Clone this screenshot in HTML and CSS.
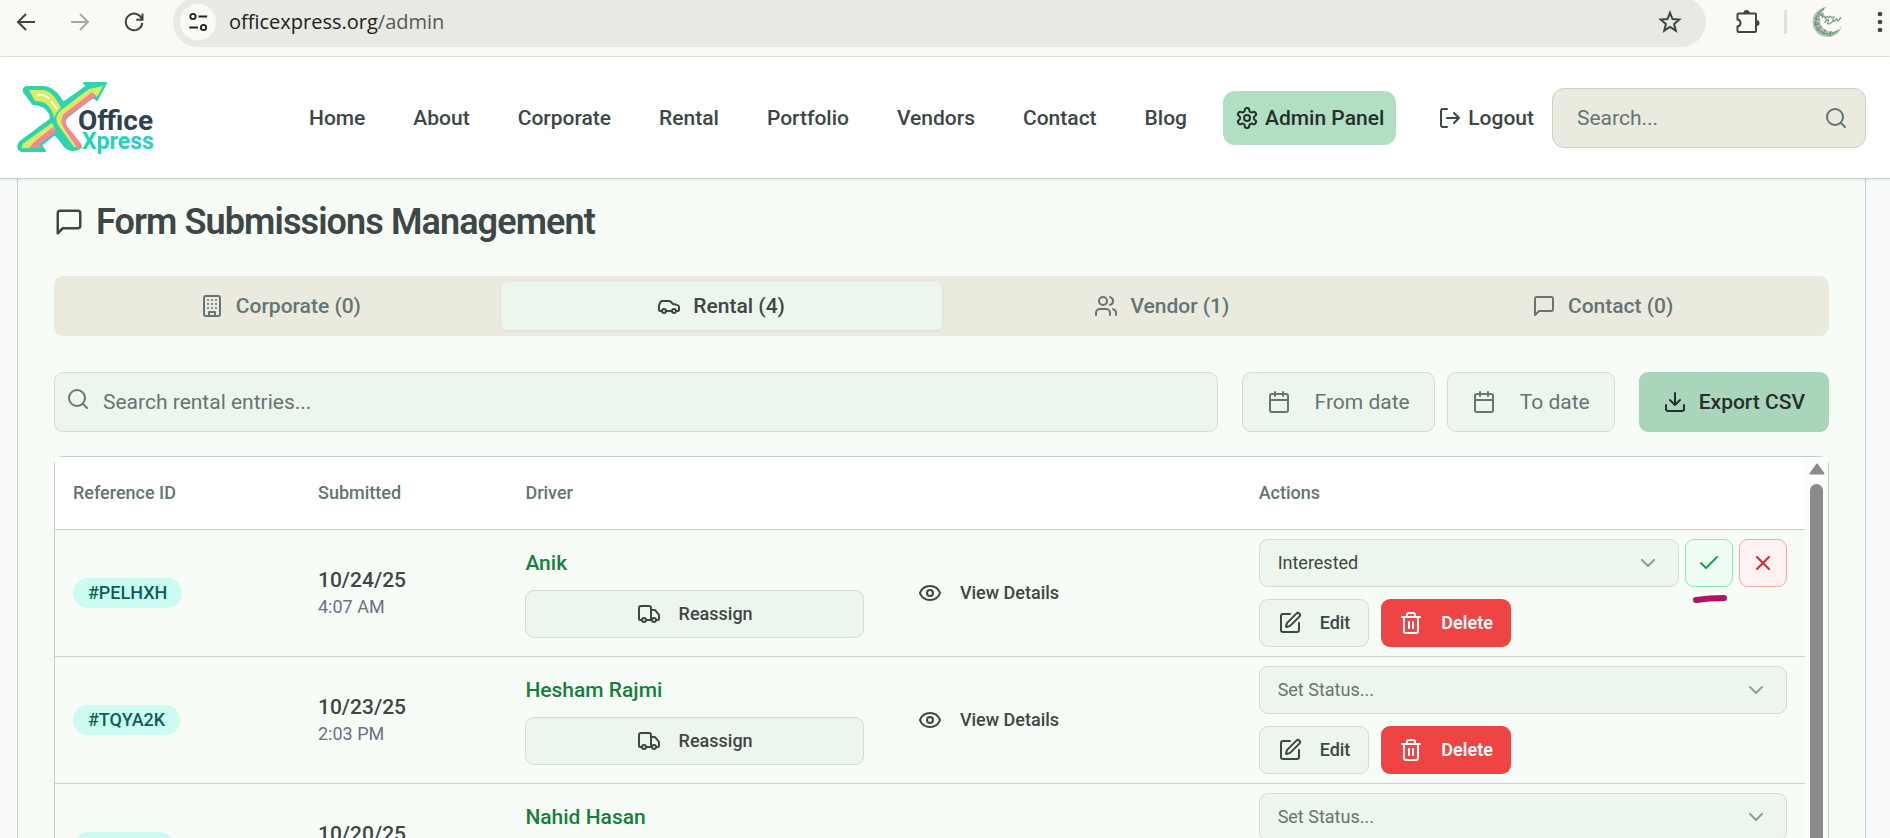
FILE: index.html
```html
<!DOCTYPE html>
<html lang="en">
<head>
<meta charset="utf-8">
<title>OfficeXpress Admin</title>
<link rel="stylesheet" href="styles.css">
</head>
<body>
<svg class="sprite" aria-hidden="true">
  <symbol id="i-gear" viewBox="0 0 24 24"><path d="M12.22 2h-.44a2 2 0 0 0-2 2v.18a2 2 0 0 1-1 1.73l-.43.25a2 2 0 0 1-2 0l-.15-.08a2 2 0 0 0-2.73.73l-.22.38a2 2 0 0 0 .73 2.73l.15.1a2 2 0 0 1 1 1.72v.51a2 2 0 0 1-1 1.74l-.15.09a2 2 0 0 0-.73 2.73l.22.38a2 2 0 0 0 2.73.73l.15-.08a2 2 0 0 1 2 0l.43.25a2 2 0 0 1 1 1.73V20a2 2 0 0 0 2 2h.44a2 2 0 0 0 2-2v-.18a2 2 0 0 1 1-1.73l.43-.25a2 2 0 0 1 2 0l.15.08a2 2 0 0 0 2.73-.73l.22-.39a2 2 0 0 0-.73-2.73l-.15-.08a2 2 0 0 1-1-1.74v-.5a2 2 0 0 1 1-1.74l.15-.09a2 2 0 0 0 .73-2.73l-.22-.38a2 2 0 0 0-2.73-.73l-.15.08a2 2 0 0 1-2 0l-.43-.25a2 2 0 0 1-1-1.73V4a2 2 0 0 0-2-2z"/><circle cx="12" cy="12" r="3"/></symbol>
  <symbol id="i-logout" viewBox="0 0 24 24"><path d="M9 21H5a2 2 0 0 1-2-2V5a2 2 0 0 1 2-2h4M16 17l5-5-5-5M21 12H9"/></symbol>
  <symbol id="i-search" viewBox="0 0 24 24"><circle cx="11" cy="11" r="8"/><path d="m21 21-4.300-4.300"/></symbol>
  <symbol id="i-message" viewBox="0 0 24 24"><path d="M21 15a2 2 0 0 1-2 2H7l-4 4V5a2 2 0 0 1 2-2h14a2 2 0 0 1 2 2z"/></symbol>
  <symbol id="i-building" viewBox="0 0 24 24"><rect width="16" height="20" x="4" y="2" rx="2"/><path d="M9 22v-4h6v4M8 6h.01M16 6h.01M12 6h.01M12 10h.01M12 14h.01M16 10h.01M16 14h.01M8 10h.01M8 14h.01"/></symbol>
  <symbol id="i-car" viewBox="0 0 24 24"><path d="M19 17h2c.6 0 1-.4 1-1v-3c0-.9-.7-1.700-1.500-1.900C18.700 10.600 16 10 16 10s-1.300-1.400-2.200-2.300c-.5-.4-1.100-.7-1.800-.7H5c-.6 0-1.100.4-1.400.9l-1.400 2.900A3.700 3.700 0 0 0 2 12v4c0 .6.4 1 1 1h2"/><circle cx="7" cy="17" r="2"/><path d="M9 17h6"/><circle cx="17" cy="17" r="2"/></symbol>
  <symbol id="i-users" viewBox="0 0 24 24"><path d="M16 21v-2a4 4 0 0 0-4-4H6a4 4 0 0 0-4 4v2"/><circle cx="9" cy="7" r="4"/><path d="M22 21v-2a4 4 0 0 0-3-3.870M16 3.130a4 4 0 0 1 0 7.750"/></symbol>
  <symbol id="i-calendar" viewBox="0 0 24 24"><path d="M8 2v4M16 2v4"/><rect width="18" height="18" x="3" y="4" rx="2"/><path d="M3 10h18"/></symbol>
  <symbol id="i-download" viewBox="0 0 24 24"><path d="M21 15v4a2 2 0 0 1-2 2H5a2 2 0 0 1-2-2v-4M7 10l5 5 5-5M12 15V3"/></symbol>
  <symbol id="i-truck" viewBox="0 0 24 24"><path d="M14 18V6a2 2 0 0 0-2-2H4a2 2 0 0 0-2 2v11a1 1 0 0 0 1 1h2M15 18H9M19 18h2a1 1 0 0 0 1-1v-3.650a1 1 0 0 0-.22-.624l-3.480-4.350A1 1 0 0 0 17.520 8H14"/><circle cx="17" cy="18" r="2"/><circle cx="7" cy="18" r="2"/></symbol>
  <symbol id="i-eye" viewBox="0 0 24 24"><path d="M2.062 12.348a1 1 0 0 1 0-.696 10.750 10.750 0 0 1 19.876 0 1 1 0 0 1 0 .696 10.750 10.750 0 0 1-19.876 0"/><circle cx="12" cy="12" r="3"/></symbol>
  <symbol id="i-chevron" viewBox="0 0 24 24"><path d="m6 9 6 6 6-6"/></symbol>
  <symbol id="i-check" viewBox="0 0 24 24"><path d="M20 6 9 17l-5-5"/></symbol>
  <symbol id="i-x" viewBox="0 0 24 24"><path d="M18 6 6 18M6 6l12 12"/></symbol>
  <symbol id="i-edit" viewBox="0 0 24 24"><path d="M12 3H5a2 2 0 0 0-2 2v14a2 2 0 0 0 2 2h14a2 2 0 0 0 2-2v-7"/><path d="M18.375 2.625a1 1 0 0 1 3 3l-9.013 9.014a2 2 0 0 1-.853.505l-2.873.84a.5.5 0 0 1-.62-.62l.84-2.873a2 2 0 0 1 .506-.852z"/></symbol>
  <symbol id="i-trash" viewBox="0 0 24 24"><path d="M3 6h18M19 6v14c0 1-1 2-2 2H7c-1 0-2-1-2-2V6M8 6V4c0-1 1-2 2-2h4c1 0 2 1 2 2v2M10 11v6M14 11v6"/></symbol>
</svg>

<div class="browser">
  <button class="tool" aria-label="Back"><svg class="glyph" viewBox="0 0 24 24"><path d="M21 12H4M12 4l-8 8 8 8"/></svg></button>
  <button class="tool tool-off" aria-label="Forward" disabled><svg class="glyph" viewBox="0 0 24 24"><path d="M3 12h17M12 4l8 8-8 8"/></svg></button>
  <button class="tool" aria-label="Reload"><svg class="glyph" viewBox="0 0 24 24"><path d="M20 9.500A8.300 8.300 0 1 0 20.300 13M20.500 3.500v6.200h-6.200"/></svg></button>
  <div class="address">
    <button class="site" aria-label="Site information"><svg class="glyph" viewBox="0 0 24 24"><circle cx="6.500" cy="6" r="2.900"/><path d="M12.500 6H22M2.500 18H12"/><circle cx="18" cy="18" r="2.900"/></svg></button>
    <span class="url">officexpress.org<span class="path">/admin</span></span>
    <button class="star" aria-label="Bookmark"><svg class="glyph" viewBox="0 0 24 24"><path d="m12 2.800 2.500 6.300 6.800.5-5.200 4.400 1.700 6.700L12 17l-5.800 3.700L7.900 14 2.700 9.600l6.800-.5z"/></svg></button>
  </div>
  <button class="tool puzzle" aria-label="Extensions"><svg class="glyph" viewBox="0 0 24 24"><path d="M2.500 3.500H19a1 1 0 0 1 1 1V21a1 1 0 0 1-1 1H2.500a1 1 0 0 1-1-1v-4.500c4-.8 4-6.200 0-7V4.500a1 1 0 0 1 1-1z"/><path class="fill" d="M7.500 3a3 3 0 0 1 6 0zM20.500 10a3 3 0 0 1 0 6z"/></svg></button>
  <span class="divider"></span>
  <button class="avatar" aria-label="Profile"><svg viewBox="0 0 32 32"><path d="M16 1A15 15 0 1 0 31 20 12 12 0 0 1 9 16C8 9 11 4 16 1z" fill="#a9c3ad"/><path d="M13 3C4 8 3 18 7 23c5 6 14 7 20 1M7 7l4 3M4 12l5 2M3 18l6 0M6 24l5-4M12 28l3-5M19 30l1-5" fill="none" stroke="#66896f" stroke-width="1.500" stroke-dasharray="2 1"/><path d="M10 9c2-4 3 0 1 3 2-3 3-2 3 0s2-3 3-1 2-2 3 0 2-1 4 0M14 17c1-5 5-4 3-1s2 2 4 0 1-5 1-2 2 1 3-1 1 4 3 1 1-3 2-1" fill="none" stroke="#7f9e85" stroke-width="1.300"/></svg></button>
  <button class="tool menu" aria-label="Menu"><svg viewBox="0 0 8 24"><circle cx="4" cy="4" r="2.300"/><circle cx="4" cy="12" r="2.300"/><circle cx="4" cy="20" r="2.300"/></svg></button>
</div>

<header class="header">
  <a class="logo" href="#" aria-label="Office Xpress">
    <svg viewBox="0 0 138 74">
      <path d="M10 6H27Q38 7 46 22L70 5 67 2H89L80 19 76 16 50 36Q46 40 49 46L64 66Q62 69 55 69 50 69 46 63L38 53 24 64 28 70H4Q-1 67 3 61L34 38Q34 31 27 26 22 23 16 23L7 11Q6 6 10 6z" fill="#2fd3b0" stroke="#2fd3b0" stroke-width="2" stroke-linejoin="round"/>
      <path d="M12 9H26Q36 10 44 27 39 31 37 37 36 28 28 22 24 20 18 20z" fill="#dcec62"/>
      <path d="M72 8 86 5 80 16 76 12 47 33Q43 37 47 44L62 66H57L41 44Q37 36 43 30z" fill="#dcec62"/>
      <path d="M75 11 78 16 51 35Q47 39 50 45L65 64 61 68 46 46Q42 38 48 32z" fill="#fb8491"/>
      <path d="M35 42 38 48 14 67H5Q4 64 7 62z" fill="#dcec62"/>
      <path d="M36 46 39 51 21 64 28 67H12L17 61z" fill="#fb8491"/>
      <path d="M20 14q8-1 12 4M34 20l6 8" fill="none" stroke="#fff" stroke-width="1.500"/>
      <text class="logo-office" x="61" y="49">Office</text>
      <text class="logo-xpress" x="65" y="68">Xpress</text>
    </svg>
  </a>
  <nav class="nav">
    <a class="link" href="#">Home</a>
    <a class="link" href="#">About</a>
    <a class="link" href="#">Corporate</a>
    <a class="link" href="#">Rental</a>
    <a class="link" href="#">Portfolio</a>
    <a class="link" href="#">Vendors</a>
    <a class="link" href="#">Contact</a>
    <a class="link" href="#">Blog</a>
    <a class="link link-active" href="#"><svg class="icon"><use href="#i-gear"/></svg>Admin Panel</a>
    <button class="link logout"><svg class="icon"><use href="#i-logout"/></svg>Logout</button>
  </nav>
  <div class="site-search">
    <input class="site-input" type="text" placeholder="Search..." aria-label="Search">
    <svg class="icon site-icon"><use href="#i-search"/></svg>
  </div>
</header>

<main class="page">
  <section class="card">
    <h1 class="title"><svg class="icon icon-lg"><use href="#i-message"/></svg>Form Submissions Management</h1>
    <div class="tabs" role="tablist">
      <button class="tab" role="tab"><svg class="icon"><use href="#i-building"/></svg>Corporate (0)</button>
      <button class="tab tab-active" role="tab" aria-selected="true"><svg class="icon"><use href="#i-car"/></svg>Rental (4)</button>
      <button class="tab" role="tab"><svg class="icon"><use href="#i-users"/></svg>Vendor (1)</button>
      <button class="tab" role="tab"><svg class="icon"><use href="#i-message"/></svg>Contact (0)</button>
    </div>
    <div class="filters">
      <div class="search">
        <input class="search-input" type="text" placeholder="Search rental entries..." aria-label="Search rental entries">
        <svg class="icon search-icon"><use href="#i-search"/></svg>
      </div>
      <div class="dates">
        <button class="date"><svg class="icon"><use href="#i-calendar"/></svg>From date</button>
        <button class="date"><svg class="icon"><use href="#i-calendar"/></svg>To date</button>
      </div>
      <button class="export"><svg class="icon"><use href="#i-download"/></svg>Export CSV</button>
    </div>
    <div class="table-box">
      <table class="table">
        <colgroup><col class="c-ref"><col class="c-sub"><col class="c-driver"><col class="c-view"><col class="c-act"></colgroup>
        <thead>
          <tr><th>Reference ID</th><th>Submitted</th><th>Driver</th><th></th><th>Actions</th></tr>
        </thead>
        <tbody>
          <tr>
            <td><span class="badge">#PELHXH</span></td>
            <td><div class="day">10/24/25</div><div class="time">4:07 AM</div></td>
            <td><div class="driver">Anik</div><button class="btn btn-wide"><svg class="icon"><use href="#i-truck"/></svg>Reassign</button></td>
            <td><button class="btn btn-ghost"><svg class="icon"><use href="#i-eye"/></svg>View Details</button></td>
            <td>
              <div class="status">
                <div class="select"><select class="select-input select-set" aria-label="Status"><option>Interested</option></select><svg class="icon chevron"><use href="#i-chevron"/></svg></div>
                <button class="btn-icon accept" aria-label="Accept"><svg class="icon"><use href="#i-check"/></svg><svg class="mark" viewBox="0 0 38 10" aria-hidden="true"><path d="M5 6Q18 4 33 4"/></svg></button>
                <button class="btn-icon reject" aria-label="Reject"><svg class="icon"><use href="#i-x"/></svg></button>
              </div>
              <div class="row-actions"><button class="btn"><svg class="icon"><use href="#i-edit"/></svg>Edit</button><button class="btn btn-delete"><svg class="icon"><use href="#i-trash"/></svg>Delete</button></div>
            </td>
          </tr>
          <tr>
            <td><span class="badge">#TQYA2K</span></td>
            <td><div class="day">10/23/25</div><div class="time">2:03 PM</div></td>
            <td><div class="driver">Hesham Rajmi</div><button class="btn btn-wide"><svg class="icon"><use href="#i-truck"/></svg>Reassign</button></td>
            <td><button class="btn btn-ghost"><svg class="icon"><use href="#i-eye"/></svg>View Details</button></td>
            <td>
              <div class="status"><div class="select"><select class="select-input" aria-label="Status"><option>Set Status...</option></select><svg class="icon chevron"><use href="#i-chevron"/></svg></div></div>
              <div class="row-actions"><button class="btn"><svg class="icon"><use href="#i-edit"/></svg>Edit</button><button class="btn btn-delete"><svg class="icon"><use href="#i-trash"/></svg>Delete</button></div>
            </td>
          </tr>
          <tr>
            <td><span class="badge">#R7JL4F</span></td>
            <td><div class="day">10/20/25</div><div class="time">1:15 PM</div></td>
            <td><div class="driver">Nahid Hasan</div><button class="btn btn-wide"><svg class="icon"><use href="#i-truck"/></svg>Reassign</button></td>
            <td><button class="btn btn-ghost"><svg class="icon"><use href="#i-eye"/></svg>View Details</button></td>
            <td>
              <div class="status"><div class="select"><select class="select-input" aria-label="Status"><option>Set Status...</option></select><svg class="icon chevron"><use href="#i-chevron"/></svg></div></div>
              <div class="row-actions"><button class="btn"><svg class="icon"><use href="#i-edit"/></svg>Edit</button><button class="btn btn-delete"><svg class="icon"><use href="#i-trash"/></svg>Delete</button></div>
            </td>
          </tr>
        </tbody>
      </table>
      <div class="scrollbar">
        <svg class="scroll-up" viewBox="0 0 16 12"><path d="M8 1.500 14.500 10.500h-13z"/></svg>
        <div class="thumb"></div>
      </div>
    </div>
  </section>
</main>
</body>
</html>
```

FILE: styles.css
```css
* { box-sizing: border-box; }

body {
  margin: 0;
  height: 100vh;
  overflow: hidden;
  display: flex;
  flex-direction: column;
  background: #f8fafc;
  color: #3d4746;
  font-family: Roboto, "Liberation Sans", sans-serif;
  font-size: 21px;
  line-height: 30px;
}

button, input, select { font: inherit; color: inherit; }
button { border: 0; padding: 0; background: none; cursor: pointer; }
a { color: inherit; text-decoration: none; }

.sprite { display: none; }

.icon {
  flex: none;
  width: 24px;
  height: 24px;
  fill: none;
  stroke: currentColor;
  stroke-width: 2;
  stroke-linecap: round;
  stroke-linejoin: round;
}
.icon-lg { width: 30px; height: 30px; }

/* Browser toolbar */
.browser {
  flex: none;
  display: flex;
  align-items: center;
  height: 57px;
  padding: 0 6px 12px 14px;
  background: #faf9f5;
  border-bottom: 1px solid #e3e2dc;
  color: #3e473f;
}
.glyph {
  display: block;
  width: 24px;
  height: 24px;
  fill: none;
  stroke: currentColor;
  stroke-width: 2;
}
.glyph .fill { fill: currentColor; stroke: none; }
.tool { flex: none; width: 24px; margin-right: 30px; }
.tool-off { color: #a5a7a2; }
.address {
  flex: 1;
  display: flex;
  align-items: center;
  height: 50px;
  margin: 0 30px 0 -3px;
  padding: 0 24px 0 7px;
  border-radius: 25px;
  background: #e8e9e3;
}
.site {
  display: grid;
  place-items: center;
  width: 36px;
  height: 36px;
  border-radius: 50%;
  background: #faf9f5;
  color: #222;
}
.site .glyph { width: 22px; height: 22px; }
.url {
  flex: 1;
  margin-left: 13px;
  color: #202020;
  font-family: "Open Sans", "Noto Sans", sans-serif;
  font-size: 20px;
}
.path { color: #55595a; }
.puzzle { margin-right: 24px; }
.divider { width: 3px; height: 24px; margin-right: 24px; background: #d8e5d2; }
.avatar { width: 32px; height: 32px; margin-right: 33px; }
.avatar svg { display: block; }
.menu { width: 8px; margin-right: 0; }
.menu svg { display: block; width: 8px; height: 24px; fill: #3e473f; }

/* Site header */
.header {
  position: relative;
  z-index: 1;
  flex: none;
  display: flex;
  align-items: center;
  height: 122px;
  padding: 0 24px 0 17px;
  background: #fff;
  border-bottom: 1px solid #c9d2d1;
  box-shadow: 0 1px 3px rgba(0, 0, 0, 0.1);
}
.logo svg { display: block; width: 138px; height: 74px; }
.logo-office, .logo-xpress { font-family: Roboto, sans-serif; font-weight: 700; }
.logo-office { font-size: 28px; fill: #2e4150; }
.logo-xpress { font-size: 23px; fill: #22d3be; }
.nav { display: flex; align-items: center; gap: 24px; margin-left: auto; }
.link {
  display: flex;
  align-items: center;
  gap: 6px;
  height: 54px;
  padding: 0 12px;
  border-radius: 12px;
  font-weight: 500;
  white-space: nowrap;
}
.link-active { background: #b1dfc3; color: #25302c; }
.logout { padding: 0 18px; }
.site-search { position: relative; width: 314px; }
.site-input {
  display: block;
  width: 100%;
  height: 60px;
  padding: 0 60px 0 24px;
  border: 1px solid #c9cfc9;
  border-radius: 12px;
  background: #ebeadf;
}
.site-icon { position: absolute; top: 18px; right: 18px; color: #647573; }
::placeholder { color: #647573; opacity: 1; }

/* Submissions card */
.page { flex: 1; display: flex; min-height: 0; padding: 0 24px 0 17px; }
.card {
  flex: 1;
  display: flex;
  flex-direction: column;
  min-width: 0;
  padding: 25px 36px 0;
  overflow: hidden;
  border: 1px solid #c9d2d1;
  border-width: 0 1px;
  background: #f7fcf7;
}
.title {
  display: flex;
  align-items: center;
  gap: 12px;
  margin: 0 0 36px;
  font-size: 36px;
  font-weight: 600;
  line-height: 36px;
  letter-spacing: -0.025em;
}
.tabs {
  flex: none;
  display: grid;
  grid-template-columns: repeat(4, 1fr);
  padding: 6px;
  border-radius: 9px;
  background: #ebeadf;
  color: #647573;
}
.tab {
  display: flex;
  align-items: center;
  justify-content: center;
  gap: 12px;
  height: 48px;
  border-radius: 6px;
  font-weight: 500;
}
.tab-active { background: #ecf6ed; color: #3d4746; box-shadow: 0 1px 3px rgba(0, 0, 0, 0.06); }
.filters { flex: none; display: flex; gap: 24px; margin: 36px 0 24px; }
.search { position: relative; flex: 1; }
.search-input {
  display: block;
  width: 100%;
  height: 60px;
  padding: 0 18px 0 48px;
  border: 1px solid #d3dad8;
  border-radius: 9px;
  background: #ecf6ed;
}
.search-icon { position: absolute; top: 15px; left: 12px; color: #6b7280; }
.dates { display: flex; gap: 12px; }
.date, .export {
  display: flex;
  align-items: center;
  height: 60px;
  border-radius: 9px;
  white-space: nowrap;
}
.date {
  gap: 24px;
  padding: 0 24px;
  border: 1px solid #d3dad8;
  background: #ecf6ed;
  color: #647573;
}
.export {
  gap: 12px;
  padding: 0 24px;
  background: #a9d6ba;
  color: #25302c;
  font-weight: 500;
}

/* Entries table */
.table-box {
  flex: 1;
  display: flex;
  align-items: flex-start;
  min-height: 0;
  border: 1px solid #c3cecd;
  border-bottom: 0;
  border-radius: 9px 9px 0 0;
}
.table {
  flex: 1;
  min-width: 0;
  width: 100%;
  table-layout: fixed;
  border-collapse: separate;
  border-spacing: 0;
  font-size: 18px;
  line-height: 24px;
}
.c-ref { width: 14%; }
.c-sub { width: 11.85%; }
.c-driver { width: 21.4%; }
.c-view { width: 20.5%; }
th {
  height: 73px;
  padding: 0 18px;
  border-bottom: 1px solid #c9d2d1;
  background: #fff;
  color: #647573;
  font-weight: 500;
  text-align: left;
}
td { height: 127px; padding: 9px 18px; border-bottom: 1px solid #c9d2d1; vertical-align: middle; }
.badge {
  display: inline-block;
  padding: 3px 15px;
  border-radius: 15px;
  background: #cbfbf1;
  color: #115e59;
  font-weight: 500;
}
.day { font-size: 21px; line-height: 27px; font-weight: 500; }
.time { color: #6b7280; line-height: 25px; }
.driver { margin-bottom: 12px; color: #15803d; font-size: 21px; line-height: 30px; font-weight: 500; }
.btn {
  display: inline-flex;
  align-items: center;
  justify-content: center;
  gap: 18px;
  height: 48px;
  padding: 0 18px;
  border: 1px solid #d3dad8;
  border-radius: 9px;
  background: #ecf6ed;
  font-weight: 500;
  white-space: nowrap;
  vertical-align: top;
}
.btn-wide { width: 100%; }
.btn-ghost { border: 0; background: none; }
.btn-delete { border: 0; background: #ef4444; color: #fff; font-weight: 600; }
.status { display: flex; gap: 6px; margin-bottom: 12px; }
.select { position: relative; flex: 1; }
.select-input {
  display: block;
  width: 100%;
  height: 48px;
  padding: 0 48px 0 18px;
  border: 1px solid #d3dad8;
  border-radius: 9px;
  background: #ecf6ed;
  color: #647573;
  appearance: none;
}
.select-set { color: #3d4746; }
.chevron { position: absolute; top: 12px; right: 19px; opacity: 0.5; }
.btn-icon {
  position: relative;
  display: grid;
  place-items: center;
  width: 48px;
  height: 48px;
  border: 1px solid;
  border-radius: 9px;
}
.accept { border-color: #86efac; background: #f0fdf4; color: #16a34a; }
.reject { border-color: #fca5a5; background: #fef2f2; color: #dc2626; }
.mark {
  position: absolute;
  top: 54px;
  left: 5px;
  width: 38px;
  height: 10px;
  fill: none;
  stroke: #b01463;
  stroke-width: 6;
  stroke-linecap: round;
}
.row-actions { display: flex; gap: 12px; }
.scrollbar {
  flex: none;
  align-self: stretch;
  display: flex;
  flex-direction: column;
  align-items: center;
  gap: 9px;
  width: 23px;
  padding-top: 6px;
  background: #fcfcfc;
}
.scroll-up {
  width: 16px;
  height: 12px;
  fill: #8b8b8b;
  stroke: #8b8b8b;
  stroke-width: 2;
  stroke-linejoin: round;
}
.thumb { flex: 1; width: 13px; border-radius: 7px 7px 0 0; background: #8b8b8b; }
```
